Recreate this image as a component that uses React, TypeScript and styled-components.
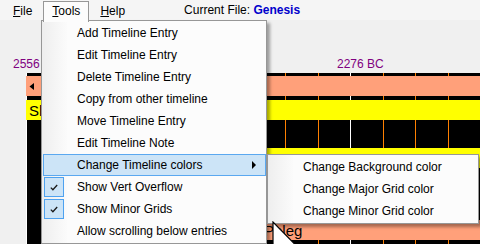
import { FC } from "react"
import styled, { createGlobalStyle } from "styled-components"

const GlobalStyle = createGlobalStyle`
    html, body {
        margin: 0;
        padding: 0;
        background: #f0f0f0;
    }
    body {
        font-family: "Liberation Sans", Arial, sans-serif;
        font-size: 12px;
        color: #000;
    }
`

// timeline scale: line 0 sits on x=26 of the window, 32.43px per division
const CANVAS_LEFT = 26
const DIV_WIDTH = 32.43
const DIVISIONS = 14

const Window = styled.div`
    position: relative;
    width: 480px;
    height: 244px;
    overflow: hidden;
    background: #f0f0f0;
    display: flex;
    flex-direction: column;
`
const MenuBar = styled.div`
    height: 20px;
    flex-shrink: 0;
    display: flex;
    align-items: flex-start;
    gap: 2px;
    padding-left: 4px;
    background: #f5f5f5;
`
const MenuTitle = styled.div<{ $open?: boolean }>`
    position: relative;
    z-index: ${({ $open }) => ($open ? 5 : 1)};
    margin-top: 1px;
    height: 20px;
    line-height: 19px;
    padding: 0 8px;
    border: 1px solid ${({ $open }) => ($open ? "#979797" : "transparent")};
    border-bottom: none;
    background: ${({ $open }) => ($open ? "#fcfcfc" : "transparent")};
    u { text-decoration: underline; }
`
const FileLabel = styled.div`
    margin-left: 48px;
    margin-top: 1px;
    line-height: 19px;
    b {
        color: #0000cc;
        font-weight: bold;
    }
`
const ScaleRow = styled.div`
    position: relative;
    height: 53px;
    flex-shrink: 0;
`
const ScaleLabel = styled.span`
    position: absolute;
    bottom: 2px;
    line-height: 14px;
    color: #800080;
`
const Canvas = styled.div`
    position: relative;
    margin-left: ${CANVAS_LEFT}px;
    flex: 1;
    background: #000;
    display: flex;
    flex-direction: column;
`
const GridLine = styled.div<{ $major?: boolean }>`
    position: absolute;
    top: 0;
    bottom: 0;
    width: 1px;
    background: ${({ $major }) => ($major ? "#ffffff" : "#ff8000")};
`
const Band = styled.div<{ $h: number }>`
    position: relative;
    height: ${({ $h }) => $h}px;
    flex-shrink: 0;
`
const FullRow = styled.div<{ $color: string }>`
    position: relative;
    z-index: 1;
    height: 20px;
    flex-shrink: 0;
    display: flex;
    align-items: center;
    padding-left: 3px;
    background: ${({ $color }) => $color};
    font-size: 15px;
`
const EventRow = styled.div`
    position: relative;
    z-index: 1;
    height: 20px;
    flex-shrink: 0;
    display: flex;
`
const EventBar = styled.div<{ $color: string; $start: number }>`
    margin-left: ${({ $start }) => $start}px;
    flex: 1;
    display: flex;
    align-items: center;
    padding-left: 4px;
    background: ${({ $color }) => $color};
    font-size: 15px;
`
const Dropdown = styled.div<{ $left: number; $top: number; $width: number }>`
    position: absolute;
    z-index: 4;
    left: ${({ $left }) => $left}px;
    top: ${({ $top }) => $top}px;
    width: ${({ $width }) => $width}px;
    box-sizing: border-box;
    padding: 1px 0;
    border: 1px solid #979797;
    background:
        linear-gradient(to right, #eeeeee, #fbfbfb) 0 0 / 25px 100% no-repeat,
        #fcfcfc;
    box-shadow: 3px 3px 3px rgba(0, 0, 0, 0.35);
`
const Item = styled.div<{ $active?: boolean }>`
    height: 22px;
    box-sizing: border-box;
    margin-left: 1px;
    display: flex;
    align-items: center;
    border: 1px solid ${({ $active }) => ($active ? "#5aa8f0" : "transparent")};
    background: ${({ $active }) => ($active ? "#cce4f7" : "transparent")};
    white-space: nowrap;
`
const CheckSlot = styled.div<{ $checked?: boolean }>`
    width: 20px;
    height: 20px;
    box-sizing: border-box;
    flex-shrink: 0;
    display: flex;
    align-items: center;
    justify-content: center;
    border: 1px solid ${({ $checked }) => ($checked ? "#4ea2f0" : "transparent")};
    background: ${({ $checked }) => ($checked ? "#cce4f7" : "transparent")};
`
const ItemLabel = styled.span`
    margin-left: 13px;
`
const SubArrow = styled.div`
    margin-left: auto;
    margin-right: 9px;
    width: 0;
    height: 0;
    border-top: 4px solid transparent;
    border-bottom: 4px solid transparent;
    border-left: 4px solid #000;
`
const Cursor = styled.svg`
    position: absolute;
    z-index: 10;
    left: 272px;
    top: 221px;
`

interface IMenuItem {
    label: string
    checked?: boolean
    sub?: boolean
    active?: boolean
}

const TOOLS: IMenuItem[] = [
    { label: "Add Timeline Entry" },
    { label: "Edit Timeline Entry" },
    { label: "Delete Timeline Entry" },
    { label: "Copy from other timeline" },
    { label: "Move Timeline Entry" },
    { label: "Edit Timeline Note" },
    { label: "Change Timeline colors", sub: true, active: true },
    { label: "Show Vert Overflow", checked: true },
    { label: "Show Minor Grids", checked: true },
    { label: "Allow scrolling below entries" },
]

const COLORS: IMenuItem[] = [
    { label: "Change Background color" },
    { label: "Change Major Grid color" },
    { label: "Change Minor Grid color" },
]

const Check = () => (
    <svg width="8" height="7" viewBox="0 0 8 7">
        <path d="M0.8 3.6 L2.9 5.7 L7.2 1" fill="none" stroke="#1a1a1a" strokeWidth="1.3" />
    </svg>
)

const MenuList: FC<{ items: IMenuItem[] }> = ({ items }) => (
    <>
        {items.map((it) => (
            <Item key={it.label} $active={it.active}>
                <CheckSlot $checked={it.checked}>{it.checked && <Check />}</CheckSlot>
                <ItemLabel>{it.label}</ItemLabel>
                {it.sub && <SubArrow />}
            </Item>
        ))}
    </>
)

const App = () => {
    const lines = Array.from({ length: DIVISIONS }, (_, k) => k)
    return (
        <Window>
            <GlobalStyle />
            <MenuBar>
                <MenuTitle><u>F</u>ile</MenuTitle>
                <MenuTitle $open><u>T</u>ools</MenuTitle>
                <MenuTitle><u>H</u>elp</MenuTitle>
                <FileLabel>Current File: <b>Genesis</b></FileLabel>
            </MenuBar>
            <ScaleRow>
                <ScaleLabel style={{ left: 13 }}>2556</ScaleLabel>
                <ScaleLabel style={{ left: 337 }}>2276 BC</ScaleLabel>
            </ScaleRow>
            <Canvas>
                {lines.map((k) => (
                    <GridLine key={k} $major={k % 10 === 0} style={{ left: Math.round(k * DIV_WIDTH) }} />
                ))}
                <Band $h={3} />
                <FullRow $color="#ffa07a">
                    <svg width="6" height="7" viewBox="0 0 6 7">
                        <path d="M5 0 V7 L0.5 3.5 Z" fill="#000" />
                    </svg>
                </FullRow>
                <Band $h={4} />
                <FullRow $color="#ffff00">Shem</FullRow>
                <Band $h={28} />
                <EventRow>
                    <EventBar $color="#ffff00" $start={170}>Arphaxad</EventBar>
                </EventRow>
                <Band $h={52} />
                <EventRow>
                    <EventBar $color="#ffa07a" $start={234}>Peleg</EventBar>
                </EventRow>
            </Canvas>

            <Dropdown $left={41} $top={20} $width={226}>
                <MenuList items={TOOLS} />
            </Dropdown>
            <Dropdown $left={267} $top={154} $width={212}>
                <MenuList items={COLORS} />
            </Dropdown>

            <Cursor width="26" height="40" viewBox="0 0 13 20">
                <path
                    d="M0.5 0.5 V16.5 L4.3 12.9 L6.8 18.7 L9.2 17.7 L6.8 12 H11.8 Z"
                    fill="#fff"
                    stroke="#000"
                    strokeWidth="0.6"
                    strokeLinejoin="miter"
                />
            </Cursor>
        </Window>
    )
}

export default App
